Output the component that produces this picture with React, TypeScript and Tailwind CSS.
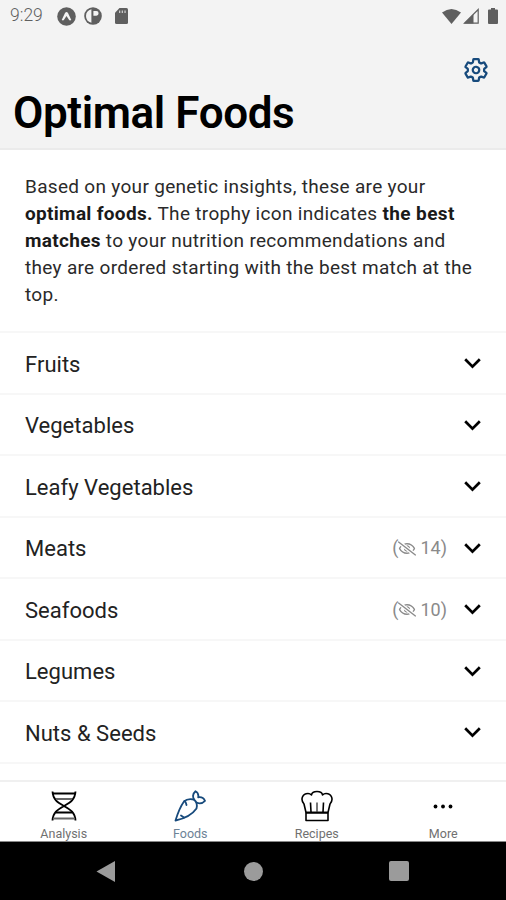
import type { ReactNode } from 'react'
import { FaRegEyeSlash } from 'react-icons/fa'
import { IoSettingsOutline } from 'react-icons/io5'

interface Category {
  name: string
  hidden?: number
}

const CATEGORIES: Category[] = [
  { name: 'Fruits' },
  { name: 'Vegetables' },
  { name: 'Leafy Vegetables' },
  { name: 'Meats', hidden: 14 },
  { name: 'Seafoods', hidden: 10 },
  { name: 'Legumes' },
  { name: 'Nuts & Seeds' },
]

function StatusBar() {
  return (
    <div className="flex h-8 items-center justify-between pl-[10px] pr-[8px] text-[#5f5f5f]">
      <div className="flex items-center">
        <span className="w-[47px] text-[17.5px] font-light leading-none">9:29</span>
        <svg className="h-[19px] w-[19px]" viewBox="0 0 19 19">
          <circle cx="9.5" cy="9.5" r="9.3" fill="currentColor" />
          <path d="M4.7 13 8 6q1.5-2 3 0l3.3 7q-2 1.2-2.8-.9L9.5 9l-2 3.1q-.8 2.1-2.8.9Z" fill="#f3f3f3" />
        </svg>
        <svg className="ml-[8px] h-[18px] w-[18px]" viewBox="0 0 18 18">
          <circle cx="9" cy="9" r="8.8" fill="currentColor" />
          <path d="M7.4 2.2V15.8Q2 14.4 2 9T7.4 2.2ZM9.4 4H12.4Q14.6 4 14.6 6.3T12.4 8.8H9.4Z" fill="#f3f3f3" />
        </svg>
        <svg className="ml-[13px] h-[16px] w-[13px]" viewBox="0 0 13 16">
          <path d="M4.5 0H11.5Q13 0 13 1.5V14.5Q13 16 11.5 16H1.5Q0 16 0 14.5V4.8Z" fill="currentColor" />
          <path d="M4 2.5h1.3v2.5H4zM6.7 2.5H8v2.5H6.7zM9.4 2.5h1.3v2.5H9.4z" fill="#c9c9c9" />
        </svg>
      </div>
      <div className="flex items-center">
        <svg className="h-[15px] w-[19px]" viewBox="0 0 19 15">
          <path d="M0 3.5Q9.5-3.5 19 3.5L9.5 15Z" fill="currentColor" />
        </svg>
        <svg className="ml-[2px] h-[16px] w-[16px]" viewBox="0 0 16 16">
          <path d="M15.2 1.5V15.2H1.5Z" fill="none" stroke="currentColor" strokeWidth="1.2" />
          <path d="M10.5 6V15.5H1Z" fill="currentColor" />
        </svg>
        <svg className="ml-[9px] h-[16px] w-[10px]" viewBox="0 0 10 16">
          <path d="M3 0H7V1.5H9Q10 1.5 10 2.5V15Q10 16 9 16H1Q0 16 0 15V2.5Q0 1.5 1 1.5H3Z" fill="currentColor" />
        </svg>
      </div>
    </div>
  )
}

function DnaIcon() {
  return (
    <svg className="h-8 w-8" viewBox="0 0 32 32" fill="none" stroke="currentColor">
      <path d="M4.5 1.5C5 10 10 12.5 16 16S27 22 27.5 30.5M27.5 1.5C27 10 22 12.5 16 16S5 22 4.5 30.5" strokeWidth="1.8" />
      <path d="M5 3.5H27M8 22.5H24" strokeWidth="2.2" />
      <path d="M8 9H24M5 28.5H27" stroke="#666" strokeWidth="1.9" />
    </svg>
  )
}

function CarrotIcon() {
  return (
    <svg className="h-8 w-8" viewBox="0 0 32 32" fill="none" stroke="currentColor" strokeWidth="1.8" strokeLinejoin="round" strokeLinecap="round">
      <path d="M1.5 30.5C3.5 24 6 17 10 11.5Q13.5 8 20 9.5Q24 13 22.5 18.5C18 25 8.5 29 1.5 30.5Z" />
      <path d="M20 9.5Q17.5 4.5 21.5 1.2Q25 3 24.2 7.3Q29 6.5 31 10.8Q27.5 14.5 22.7 12.7" />
      <path d="M10.5 11Q12 12 12.5 15M7 25.5 10 27.5" />
    </svg>
  )
}

function ChefHatIcon() {
  return (
    <svg className="h-8 w-8" viewBox="0 0 32 32" fill="none" stroke="currentColor" strokeWidth="1.6" strokeLinejoin="round">
      <path d="M5 22.5 3 14C-1 9.5 1.5 3.5 7 3.5Q9 3.5 10.5 5Q11 1.5 16 1.5T21.5 5Q23 3.5 25 3.5C30.5 3.5 33 9.5 29 14L27 22.5Z" />
      <path d="M9.5 12.5 10 22M22.5 12.5 22 22M5 22.5V30.5H27V22.5" />
      <path d="M16 12.5V22" stroke="#777" strokeWidth="2" />
      <path d="M5 22.7H27" strokeWidth="2" />
    </svg>
  )
}

function MoreIcon() {
  return (
    <svg className="h-8 w-8" viewBox="0 0 32 32" fill="currentColor">
      <circle cx="8.5" cy="16.5" r="1.9" />
      <circle cx="16" cy="16.5" r="1.9" />
      <circle cx="23.5" cy="16.5" r="1.9" />
    </svg>
  )
}

function CategoryRow({ name, hidden }: Category) {
  return (
    <button className="flex h-[61.5px] w-full flex-shrink-0 items-center border-t-2 border-[#f7f7f7] pl-[25px] pr-[25px] pt-[2px] text-left text-[#222]">
      <span className="flex-1 pt-[2px] text-[22px] leading-none tracking-[0.02px]">{name}</span>
      {hidden !== undefined && (
        <span className="mr-[17px] flex items-center text-[18px] leading-none text-[#8a8a8a]">
          (
          <FaRegEyeSlash className="h-[15px] w-[18px]" />
          <span className="ml-[4px]">{hidden})</span>
        </span>
      )}
      <svg className="h-[11px] w-[17px] text-black" viewBox="0 0 17 11" fill="none" stroke="currentColor" strokeWidth="2.7">
        <path d="M1.2 1.2 8.5 8.6 15.8 1.2" />
      </svg>
    </button>
  )
}

function Tab({ label, icon, active }: { label: string; icon: ReactNode; active?: boolean }) {
  return (
    <button className={`flex flex-1 flex-col items-center pl-[1px] pt-[8px] ${active ? 'text-[#174a7c]' : 'text-black'}`}>
      {icon}
      <span className={`mt-[5px] text-[12.5px] leading-[14px] ${active ? 'text-[#6c8296]' : 'text-[#707070]'}`}>
        {label}
      </span>
    </button>
  )
}

export default function App() {
  return (
    <div className="flex h-[900px] w-[506px] flex-col overflow-hidden bg-white font-['Roboto',sans-serif]">
      <header className="h-[150px] flex-shrink-0 border-b-2 border-[#ebebeb] bg-[#f3f3f3]">
        <StatusBar />
        <div className="flex justify-end pr-[17px] pt-[25px]">
          <IoSettingsOutline className="h-[26px] w-[26px] text-[#174a7c] [&_path]:stroke-[44px]" />
        </div>
        <h1 className="pl-[13px] pt-[1px] text-[44px] font-semibold leading-[58px] tracking-[-0.4px] text-black">Optimal Foods</h1>
      </header>

      <main className="flex min-h-0 flex-1 flex-col overflow-hidden">
        <p className="h-[181px] flex-shrink-0 whitespace-nowrap pl-[25px] pt-[23px] text-[19px] leading-[27px] tracking-[0.31px] text-[#2a2a2a]">
          Based on your genetic insights, these are your
          <br />
          <b className="text-[#1a1a1a]">optimal foods.</b> The trophy icon indicates <b className="tracking-[0.4px] text-[#1a1a1a]">the best</b>
          <br />
          <b className="text-[#1a1a1a]">matches</b> to your nutrition recommendations and
          <br />
          they are ordered starting with the best match at the
          <br />
          top.
        </p>
        {CATEGORIES.map(c => (
          <CategoryRow key={c.name} {...c} />
        ))}
        <div className="h-4 flex-shrink-0 border-t-2 border-[#f7f7f7]" />
      </main>

      <nav className="flex h-[62px] flex-shrink-0 border-b border-t-2 border-b-[#888] border-t-[#f0f0f0]">
        <Tab label="Analysis" icon={<DnaIcon />} />
        <Tab label="Foods" icon={<CarrotIcon />} active />
        <Tab label="Recipes" icon={<ChefHatIcon />} />
        <Tab label="More" icon={<MoreIcon />} />
      </nav>

      {/* Android system buttons */}
      <div className="flex h-[58px] flex-shrink-0 items-center justify-between bg-black pl-[96px] pr-[97px] text-[#9b9b9b]">
        <svg className="h-[21px] w-[19px]" viewBox="0 0 19 21" fill="currentColor">
          <path d="M0.5 10.5 19 0V21Z" />
        </svg>
        <div className="ml-[2px] h-[19px] w-[19px] rounded-full bg-[#9b9b9b]" />
        <div className="h-[20px] w-[20px] rounded-[2px] bg-[#9b9b9b]" />
      </div>
    </div>
  )
}
